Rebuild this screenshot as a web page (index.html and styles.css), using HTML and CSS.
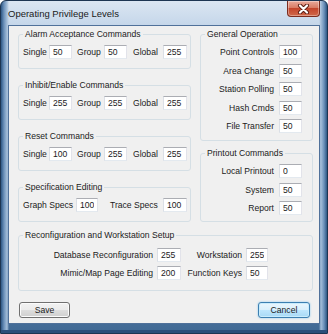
FILE: index.html
```html
<!DOCTYPE html>
<html lang="en">
<head>
    <meta charset="UTF-8">
    <title>Operating Privilege Levels</title>
    <link rel="stylesheet" href="styles.css">
</head>
<body>
    <div class="window">
        <div class="titlebar">
            <span class="title">Operating Privilege Levels</span>
            <span class="close">
                <svg width="13" height="10" viewBox="0 0 13 10">
                    <path d="M3 1.5 L10 8.5 M10 1.5 L3 8.5" stroke="#5a1a10" stroke-width="4" stroke-linecap="round"/>
                    <path d="M3 1.5 L10 8.5 M10 1.5 L3 8.5" stroke="#fff" stroke-width="2.2" stroke-linecap="round"/>
                </svg>
            </span>
        </div>

        <div class="client">
            <div class="columns">
                <div class="col">
                    <fieldset class="group">
                        <legend>Alarm Acceptance Commands</legend>
                        <div class="trio">
                            <label>Single</label><input class="field" value="50">
                            <label class="pad5">Group</label><input class="field" value="50">
                            <label class="pad6">Global</label><input class="field" value="255">
                        </div>
                    </fieldset>
                    <fieldset class="group">
                        <legend>Inhibit/Enable Commands</legend>
                        <div class="trio">
                            <label>Single</label><input class="field" value="255">
                            <label class="pad5">Group</label><input class="field" value="255">
                            <label class="pad6">Global</label><input class="field" value="255">
                        </div>
                    </fieldset>
                    <fieldset class="group">
                        <legend>Reset Commands</legend>
                        <div class="trio">
                            <label>Single</label><input class="field" value="100">
                            <label class="pad5">Group</label><input class="field" value="255">
                            <label class="pad6">Global</label><input class="field" value="255">
                        </div>
                    </fieldset>
                    <fieldset class="group">
                        <legend>Specification Editing</legend>
                        <div class="duo">
                            <label>Graph Specs</label><input class="field" value="100">
                            <label class="pad12">Trace Specs</label><input class="field" value="100">
                        </div>
                    </fieldset>
                </div>

                <div class="col">
                    <fieldset class="group side">
                        <legend>General Operation</legend>
                        <div class="row"><label>Point Controls</label><input class="field" value="100"></div>
                        <div class="row"><label>Area Change</label><input class="field" value="50"></div>
                        <div class="row"><label>Station Polling</label><input class="field" value="50"></div>
                        <div class="row"><label>Hash Cmds</label><input class="field" value="50"></div>
                        <div class="row"><label>File Transfer</label><input class="field" value="50"></div>
                    </fieldset>
                    <fieldset class="group side printout">
                        <legend>Printout Commands</legend>
                        <div class="row"><label>Local Printout</label><input class="field" value="0"></div>
                        <div class="row"><label>System</label><input class="field" value="50"></div>
                        <div class="row"><label>Report</label><input class="field" value="50"></div>
                    </fieldset>
                </div>
            </div>

            <fieldset class="group setup">
                <legend>Reconfiguration and Workstation Setup</legend>
                <div class="setup-grid">
                    <label>Database Reconfiguration</label><input class="field" value="255">
                    <label>Workstation</label><input class="field" value="255">
                    <label>Mimic/Map Page Editing</label><input class="field" value="200">
                    <label>Function Keys</label><input class="field" value="50">
                </div>
            </fieldset>

            <div class="buttons">
                <button class="btn">Save</button>
                <button class="btn default">Cancel</button>
            </div>
        </div>
    </div>
</body>
</html>
```

FILE: styles.css
```css
* {
    box-sizing: border-box;
}
body {
    margin: 0;
    font-family: "Liberation Sans", Arial, sans-serif;
    font-size: 8.6px;
    color: #1b1b1b;
    background: #fff;
}
.window {
    width: 328px;
    height: 334px;
    border: 1px solid #1d3552;
    border-radius: 6px 6px 0 0;
    padding: 0 7px 9px;
    background:
        linear-gradient(90deg, #2e5784 0, #6d92bb 3px, #a3bdd8 6px, rgba(163,189,216,0) 8px, rgba(163,189,216,0) calc(100% - 8px), #a3bdd8 calc(100% - 6px), #6d92bb calc(100% - 3px), #2e5784 100%),
        linear-gradient(180deg, #dbe6f2 0%, #c6d7ea 7%, #9fb9d6 30%, #7196c0 70%, #3f6893 100%);
    box-shadow: inset 0 -3px 0 #2b4f7a;
}
.titlebar {
    height: 24px;
    display: flex;
    justify-content: space-between;
    align-items: flex-start;
}
.title {
    font-size: 9.5px;
    margin-top: 7px;
    color: #1a1a1a;
}
.close {
    width: 33px;
    height: 16px;
    display: flex;
    align-items: center;
    justify-content: center;
    border: 1px solid #7b2c1f;
    border-top: none;
    border-radius: 0 0 4px 4px;
    background: linear-gradient(180deg, #e9aa9c 0%, #d97b64 45%, #c4452c 50%, #d0694a 100%);
    box-shadow: inset 0 0 0 1px rgba(255,255,255,0.35);
}
.client {
    height: 299px;
    background: #f0f0f0;
    border: 1px solid #50719a;
    padding: 2px 6px 0 9px;
}
.columns {
    display: grid;
    grid-template-columns: 173px 113px;
    column-gap: 9px;
}
.col {
    display: flex;
    flex-direction: column;
    gap: 10px;
}
.group {
    margin: 0;
    min-width: 0;
    border: 1px solid #d5dfe5;
    border-radius: 3px;
    padding: 5px 3px 9px 4px;
}
.group legend {
    padding: 0 2px;
    line-height: 12px;
}
label {
    line-height: 14px;
    white-space: nowrap;
}
.field {
    width: 100%;
    height: 14px;
    margin: 0;
    padding: 0 3px;
    font: inherit;
    color: #1b1b1b;
    background: #fff;
    border: 1px solid;
    border-color: #abadb3 #e2e3ea #e3e9ef #dbdfe6;
    outline: none;
}
.trio {
    display: grid;
    grid-template-columns: 26px 23px 32px 23px 36px 24px;
    align-items: center;
}
.duo {
    display: grid;
    grid-template-columns: 53px 22px 65px 24px;
    align-items: center;
}
.pad5 { padding-left: 5px; }
.pad6 { padding-left: 6px; }
.pad12 { padding-left: 12px; }

.side {
    padding: 5px 10px 7px 4px;
    display: flex;
    flex-direction: column;
    gap: 4.5px;
}
.col .printout {
    margin-top: -4px;
    padding-bottom: 6px;
}
.row {
    display: flex;
    justify-content: flex-end;
    align-items: center;
}
.row label {
    margin-right: 5px;
}
.row .field {
    width: 23px;
}

.setup {
    margin-top: 7px;
    padding: 7px 4px 10px 4px;
}
.setup-grid {
    display: grid;
    grid-template-columns: 134px 24px 65px 22px;
    row-gap: 4px;
    align-items: center;
}
.setup-grid label {
    text-align: right;
    padding-right: 4px;
}

.buttons {
    display: flex;
    justify-content: space-between;
    margin-top: 11px;
    padding: 0 3px 0 1px;
}
.btn {
    width: 51px;
    height: 16px;
    padding: 0;
    font: inherit;
    color: #1b1b1b;
    border: 1px solid #707070;
    border-radius: 3px;
    background: linear-gradient(180deg, #f2f2f2 0%, #ebebeb 50%, #dddddd 51%, #cfcfcf 100%);
    box-shadow: inset 0 0 0 1px #fbfbfb;
}
.btn.default {
    width: 52px;
    border-color: #3c7fb1;
    background: linear-gradient(180deg, #eaf6fd 0%, #d9f0fc 50%, #bee6fd 51%, #a7d9f5 100%);
    box-shadow: inset 0 0 0 1px #c9ecfc, 0 0 2px #7ec4ee;
}
```
